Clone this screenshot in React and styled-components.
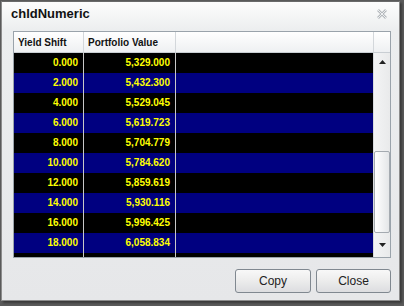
import React from "react";
import styled, { createGlobalStyle } from "styled-components";

const Global = createGlobalStyle`
  html, body { margin: 0; padding: 0; }
  body {
    width: 404px; height: 306px; overflow: hidden;
    background: #5a5a5a;
    font-family: "Liberation Sans", Arial, sans-serif;
  }
`;

const Window = styled.div`
  box-sizing: border-box;
  margin: 1px 0 0 1px;
  width: 399px;
  height: 300px;
  border: 1px solid #8c8c8c;
  border-top-color: #6a6a6a;
  background: #e8e9eb;
  display: flex;
  flex-direction: column;
  box-shadow: 2px 2px 2px rgba(0,0,0,0.35);
`;

const TitleBar = styled.div`
  height: 28px;
  flex: none;
  display: flex;
  align-items: center;
  justify-content: space-between;
  padding: 0 12px 5px 9px;
  box-sizing: border-box;
  background: linear-gradient(#fdfdfd, #eceeef);
`;

const Title = styled.span`
  font-weight: bold;
  font-size: 13px;
  color: #111;
`;

const Body = styled.div`
  flex: 1;
  display: flex;
  flex-direction: column;
  padding: 1px 8px 7px 11px;
  background: linear-gradient(#eceeef, #e6e7e9);
`;

const Grid = styled.div`
  box-sizing: border-box;
  height: 227px;
  border: 1px solid #9aa3ab;
  display: flex;
  flex-direction: column;
  background: #000;
`;

const HeaderRow = styled.div`
  height: 20px;
  flex: none;
  display: flex;
  background: linear-gradient(#ffffff, #eef0f2);
  border-bottom: 1px solid #c9ced3;
`;

const HeadCell = styled.div`
  box-sizing: border-box;
  width: ${(p) => (p.$w ? `${p.$w}px` : "auto")};
  flex: ${(p) => (p.$w ? "none" : "1")};
  border-right: ${(p) => (p.$last ? "none" : "1px solid #d3d7db")};
  font-size: 10px;
  font-weight: bold;
  color: #111;
  padding-left: 4px;
  display: flex;
  align-items: center;
`;

const BodyArea = styled.div`
  flex: 1;
  display: flex;
  min-height: 0;
`;

const Rows = styled.div`
  flex: 1;
  overflow: hidden;
`;

const Row = styled.div`
  height: 20px;
  display: flex;
  background: ${(p) => (p.$alt ? "#000080" : "#000000")};
`;

const Cell = styled.div`
  box-sizing: border-box;
  width: ${(p) => (p.$w ? `${p.$w}px` : "auto")};
  flex: ${(p) => (p.$w ? "none" : "1")};
  border-right: ${(p) => (p.$w ? "1px solid #c8c8c8" : "none")};
  color: #ffff00;
  font-size: 10px;
  font-weight: bold;
  text-align: right;
  padding-right: 5px;
  line-height: 20px;
`;

const ScrollBar = styled.div`
  width: 16px;
  flex: none;
  display: flex;
  flex-direction: column;
  background: linear-gradient(90deg, #f3f4f5, #e9eaeb);
  border-left: 1px solid #d8dbde;
`;

const Arrow = styled.div`
  height: ${(p) => p.$h}px;
  flex: none;
  display: flex;
  align-items: center;
  justify-content: center;
`;

const Track = styled.div`
  flex: 1;
  display: flex;
  flex-direction: column;
  justify-content: flex-end;
`;

const Thumb = styled.div`
  height: 82px;
  box-sizing: border-box;
  border: 1px solid #a4aab0;
  border-radius: 2px;
  background: linear-gradient(90deg, #ffffff, #e4e6e8);
`;

const ButtonRow = styled.div`
  display: flex;
  justify-content: flex-end;
  gap: 5px;
  margin-top: auto;
`;

const Button = styled.button`
  width: ${(p) => p.$w}px;
  height: 24px;
  border: 1px solid #808890;
  border-radius: 3px;
  background: linear-gradient(#f8f8f8 0%, #ececec 50%, #dcdde0 100%);
  font-family: "Liberation Sans", Arial, sans-serif;
  font-size: 12px;
  color: #222;
  padding: 0;
`;

const rows = [
  ["0.000", "5,329.000"],
  ["2.000", "5,432.300"],
  ["4.000", "5,529.045"],
  ["6.000", "5,619.723"],
  ["8.000", "5,704.779"],
  ["10.000", "5,784.620"],
  ["12.000", "5,859.619"],
  ["14.000", "5,930.116"],
  ["16.000", "5,996.425"],
  ["18.000", "6,058.834"],
];

export default function App() {
  return (
    <>
      <Global />
      <Window>
        <TitleBar>
          <Title>chldNumeric</Title>
          <svg width="10" height="10" viewBox="0 0 10 10">
            <path d="M1 1 L9 9 M9 1 L1 9" stroke="#b4b8bc" strokeWidth="2.6" fill="none" />
            <path d="M1 1 L9 9 M9 1 L1 9" stroke="#f4f5f6" strokeWidth="0.9" fill="none" />
          </svg>
        </TitleBar>
        <Body>
          <Grid>
            <HeaderRow>
              <HeadCell $w={70}>Yield Shift</HeadCell>
              <HeadCell $w={92}>Portfolio Value</HeadCell>
              <HeadCell />
              <HeadCell $w={16} $last />
            </HeaderRow>
            <BodyArea>
              <Rows>
                {rows.map(([a, b], i) => (
                  <Row key={a} $alt={i % 2 === 1}>
                    <Cell $w={70}>{a}</Cell>
                    <Cell $w={92}>{b}</Cell>
                    <Cell />
                  </Row>
                ))}
                <Row>
                  <Cell $w={70} />
                  <Cell $w={92} />
                  <Cell />
                </Row>
              </Rows>
              <ScrollBar>
                <Arrow $h={18}>
                  <svg width="7" height="4" viewBox="0 0 7 4"><path d="M0 4 L3.5 0 L7 4 Z" fill="#222" /></svg>
                </Arrow>
                <Track>
                  <Thumb />
                </Track>
                <Arrow $h={24}>
                  <svg width="7" height="4" viewBox="0 0 7 4"><path d="M0 0 L7 0 L3.5 4 Z" fill="#222" /></svg>
                </Arrow>
              </ScrollBar>
            </BodyArea>
          </Grid>
          <ButtonRow>
            <Button $w={76}>Copy</Button>
            <Button $w={75}>Close</Button>
          </ButtonRow>
        </Body>
      </Window>
    </>
  );
}
